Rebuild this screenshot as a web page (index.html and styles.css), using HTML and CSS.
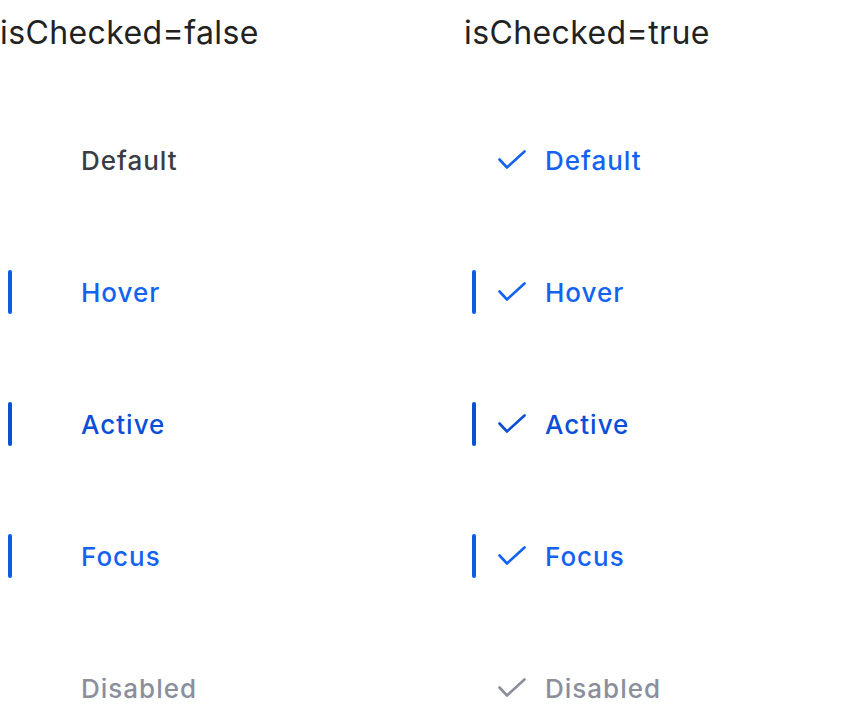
FILE: index.html
```html
<!DOCTYPE html>
<html lang="en">
<head>
  <meta charset="UTF-8" />
  <title>Menu item states</title>
  <link rel="stylesheet" href="styles.css">
</head>
<body>
  <main class="sheet">
    <!-- unchecked -->
    <section class="column">
      <h2 class="column-title">isChecked=false</h2>
      <div class="item">
        <span class="bar"></span>
        <span class="check"></span>
        <span class="label">Default</span>
      </div>
      <div class="item hover">
        <span class="bar"></span>
        <span class="check"></span>
        <span class="label">Hover</span>
      </div>
      <div class="item active">
        <span class="bar"></span>
        <span class="check"></span>
        <span class="label">Active</span>
      </div>
      <div class="item focus">
        <span class="bar"></span>
        <span class="check"></span>
        <span class="label">Focus</span>
      </div>
      <div class="item disabled">
        <span class="bar"></span>
        <span class="check"></span>
        <span class="label">Disabled</span>
      </div>
    </section>

    <!-- checked -->
    <section class="column">
      <h2 class="column-title">isChecked=true</h2>
      <div class="item checked">
        <span class="bar"></span>
        <svg class="check" viewBox="0 0 32 32"><path d="M3.5 15.5l7.5 8L28.5 7.5"/></svg>
        <span class="label">Default</span>
      </div>
      <div class="item checked hover">
        <span class="bar"></span>
        <svg class="check" viewBox="0 0 32 32"><path d="M3.5 15.5l7.5 8L28.5 7.5"/></svg>
        <span class="label">Hover</span>
      </div>
      <div class="item checked active">
        <span class="bar"></span>
        <svg class="check" viewBox="0 0 32 32"><path d="M3.5 15.5l7.5 8L28.5 7.5"/></svg>
        <span class="label">Active</span>
      </div>
      <div class="item checked focus">
        <span class="bar"></span>
        <svg class="check" viewBox="0 0 32 32"><path d="M3.5 15.5l7.5 8L28.5 7.5"/></svg>
        <span class="label">Focus</span>
      </div>
      <div class="item checked disabled">
        <span class="bar"></span>
        <svg class="check" viewBox="0 0 32 32"><path d="M3.5 15.5l7.5 8L28.5 7.5"/></svg>
        <span class="label">Disabled</span>
      </div>
    </section>
  </main>
</body>
</html>
```

FILE: styles.css
```css
body {
  margin: 0;
  font-family: Inter, "Noto Sans", sans-serif;
  background: #fff;
}

.sheet {
  display: grid;
  grid-template-columns: 464px 400px;
}

.column {
  display: flex;
  flex-direction: column;
  gap: 88px;
}

.column-title {
  margin: 0;
  height: 50px;
  font-size: 32px;
  font-weight: 400;
  letter-spacing: 0.4px;
  line-height: 66px;
  color: #222;
}

.item {
  display: flex;
  align-items: center;
  height: 44px;
  padding-left: 8px;
  color: #3a3d44;
  font-size: 26px;
  font-weight: 500;
  letter-spacing: 1px;
}

.bar {
  width: 4px;
  height: 44px;
  border-radius: 2px;
  background: transparent;
}

.check {
  width: 32px;
  height: 32px;
  margin-left: 20px;
  margin-right: 17px;
  fill: none;
  stroke: currentColor;
  stroke-width: 2.6;
  stroke-linecap: round;
  stroke-linejoin: round;
}

.checked {
  color: #1463f0;
}

.hover, .focus {
  color: #1463f0;
}

.hover .bar, .focus .bar {
  background: #0f5ae6;
}

.active {
  color: #0a4fd6;
}

.active .bar {
  background: #0a4fd6;
}

.disabled {
  color: #8b8f9b;
}
```
